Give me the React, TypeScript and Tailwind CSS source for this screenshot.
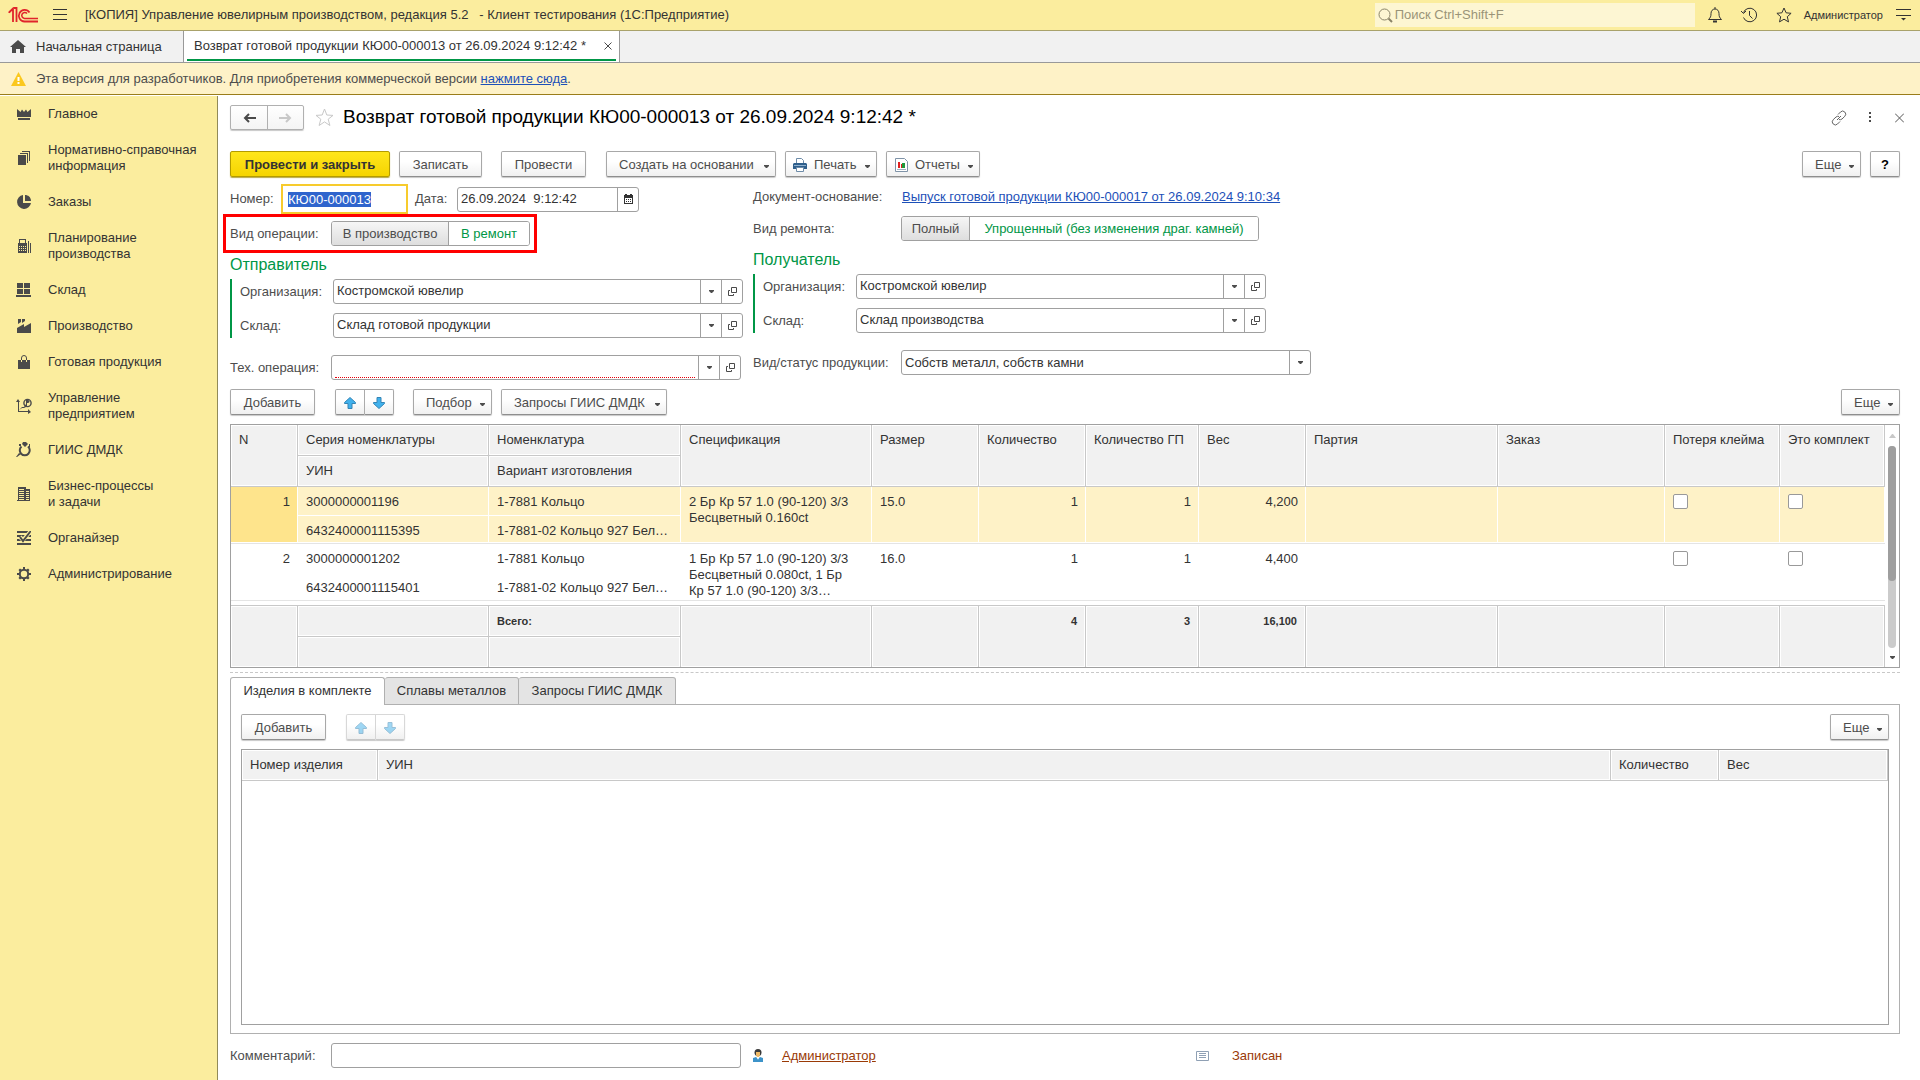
import { useEffect, useRef, useState } from 'react';
import type { ReactNode } from 'react';
import clsx from 'clsx';

const CARET = (
  <svg width="5" height="3" viewBox="0 0 5 3" className="shrink-0 fill-[#4d4d4d]">
    <path d="M0 0h5v1L3 3H2L0 1z" />
  </svg>
);

interface NavItem {
  label: string[];
  icon: ReactNode;
}

const NAV: NavItem[] = [
  {
    label: ['Главное'],
    icon: <path d="M1 3l3.500 3L6 3.500 8 6l2-2.500L11.500 6 15 3v8H1zM2 12h12v2H2z" />,
  },
  {
    label: ['Нормативно-справочная', 'информация'],
    icon: <path d="M2 5h8v10H2zM4 3h8v10h-1V4H4zM6 1h8v10h-1V2H6z" />,
  },
  {
    label: ['Заказы'],
    icon: <path d="M7 1v8h8a7 7 0 1 1-8-8zM9 1c3 0 6 2 6 6H9z" />,
  },
  {
    label: ['Планирование', 'производства'],
    icon: (
      <>
        <path d="M3 1h7v4h1v10H2V5h1zM4 2v3h5V2zM12 3h1v12h-1zM14 5h1v10h-1z" fillRule="evenodd" />
        <path d="M3 8h1v1H3zM5 8h1v1H5zM7 8h1v1H7zM9 8h1v1H9zM3 10h1v1H3zM5 10h1v1H5zM7 10h1v1H7zM9 10h1v1H9zM3 12h1v1H3zM5 12h1v1H5zM7 12h1v1H7zM9 12h1v1H9z" fill="#fbed9e" />
      </>
    ),
  },
  {
    label: ['Склад'],
    icon: <path d="M1 1h6v5H1zM8 1h6v5H8zM1 7h6v5H1zM8 7h6v5H8zM0 13h15v2H0z" />,
  },
  {
    label: ['Производство'],
    icon: <path d="M2 1h3v3L2 6zM6 1h3v2L6 5zM1 10l7-4v3l7-4v10H1z" />,
  },
  {
    label: ['Готовая продукция'],
    icon: (
      <>
        <path d="M2 6h12v9H2z" />
        <path d="M5.500 6V4a2.500 2.500 0 0 1 5 0v2" fill="none" stroke="#4a4a4a" />
        <path d="M5 6h1v2H5zM10 6h1v2h-1z" fill="#fbed9e" />
      </>
    ),
  },
  {
    label: ['Управление', 'предприятием'],
    icon: (
      <>
        <path d="M2 1l2 3H3v9h9v-2l3 3-3 2v-2H2V4H0zM3 12l3-3h2l2-3v3l-2 1H6z" />
        <circle cx="11.5" cy="5" r="3.6" fill="none" stroke="#4a4a4a" strokeWidth="1.4" />
        <path d="M10 2h2c2 0 2 3 0 3h-1v3h-1z" />
      </>
    ),
  },
  {
    label: ['ГИИС ДМДК'],
    icon: (
      <>
        <path d="M7 0h3l2 2-3 3-3-3zM0 15l3-4 2 1-4 3zM3 2h2v2H3zM13 2h1v3h-1z" />
        <path d="M5.500 4.500a5 5 0 1 0 6.500 0" fill="none" stroke="#4a4a4a" strokeWidth="2" />
      </>
    ),
  },
  {
    label: ['Бизнес-процессы', 'и задачи'],
    icon: (
      <path
        d="M2 1h8v2h4v12H1v-1h1zM3 3v1h5V3zM3 5v1h5V5zM3 7v1h5V7zM3 9v1h5V9zM3 11v1h5v-1zM3 13v1h5v-1zM10 5v1h3V5zM10 7v1h3V7zM10 9v1h3V9zM10 11v1h3v-1zM10 13v1h3v-1z"
        fillRule="evenodd"
      />
    ),
  },
  {
    label: ['Органайзер'],
    icon: (
      <>
        <path d="M1 1h14v2H1zM1 5h14v2H1zM1 9h14v2H1zM1 13h14v2H1z" />
        <path d="M4 7l3 3 7-8" fill="none" stroke="#fbed9e" strokeWidth="4" />
        <path d="M4 7l3 4 7-9" fill="none" stroke="#4a4a4a" strokeWidth="2" />
      </>
    ),
  },
  {
    label: ['Администрирование'],
    icon: (
      <>
        <circle cx="8" cy="8" r="4.200" fill="none" stroke="#4a4a4a" strokeWidth="2" />
        <path d="M7 1h2v3H7zM7 12h2v3H7zM1 7h3v2H1zM12 7h3v2h-3zM2.500 4L4 2.500 6 4 4 6zM10 4l2-1.500L13.500 4 12 6zM2.500 12L4 10l2 2-2 1.500zM10 12l2-2 1.500 2-1.500 1.500z" />
      </>
    ),
  },
];

interface ProductRow {
  n: number;
  series: string;
  uin: string;
  item: string;
  variant: string;
  spec: string[];
  size: string;
  weight: string;
}

const ROWS: ProductRow[] = [
  {
    n: 1,
    series: '3000000001196',
    uin: '6432400001115395',
    item: '1-7881 Кольцо',
    variant: '1-7881-02 Кольцо 927 Бел…',
    spec: ['2 Бр Кр 57 1.0 (90-120) 3/3', 'Бесцветный 0.160ct'],
    size: '15.0',
    weight: '4,200',
  },
  {
    n: 2,
    series: '3000000001202',
    uin: '6432400001115401',
    item: '1-7881 Кольцо',
    variant: '1-7881-02 Кольцо 927 Бел…',
    spec: ['1 Бр Кр 57 1.0 (90-120) 3/3', 'Бесцветный 0.080ct, 1 Бр', 'Кр 57 1.0 (90-120) 3/3…'],
    size: '16.0',
    weight: '4,400',
  },
];

const HEAD_CELL =
  'border-r border-[#c8c8c8] bg-[#f1f1f1] shadow-[inset_0_0_0_1px_#fff] px-2 pt-[7px] text-left align-top';

function Button({
  children,
  className,
  menu,
  disabled,
  label,
}: {
  children: ReactNode;
  className?: string;
  menu?: boolean;
  disabled?: boolean;
  label?: string;
}) {
  return (
    <button
      type="button"
      disabled={disabled}
      aria-label={label}
      className={clsx(
        'flex h-[26px] shrink-0 items-center rounded-[2px] border bg-linear-to-b from-white from-40% to-[#f0f0f0] pt-px whitespace-nowrap text-[#4d4d4d] shadow-[0_1px_1px_#c8c8c8]',
        disabled ? 'border-[#d8d8d8] border-b-[#c8c8c8]' : 'border-[#a8a8a8] border-b-[#8e8e8e]',
        menu ? 'justify-between pr-[6px]' : 'justify-center',
        className,
      )}
    >
      {children}
      {menu && <span className="flex pt-1">{CARET}</span>}
    </button>
  );
}

function Arrow({ down, faded }: { down?: boolean; faded?: boolean }) {
  return (
    <svg width="12" height="12" viewBox="0 0 12 12" className={clsx(faded && 'opacity-50')}>
      <path
        d={down ? 'M4 .5h4v5h3.500v1L6 11.500.5 6.500v-1H4z' : 'M4 11.500h4v-5h3.500v-1L6 .5.5 5.500v1H4z'}
        fill="#41b1ec"
        stroke="#3484b5"
      />
    </svg>
  );
}

function MoveButtons({ disabled }: { disabled?: boolean }) {
  return (
    <div className="flex">
      <Button label="Переместить вверх" disabled={disabled} className="w-[30px] rounded-r-none">
        <Arrow faded={disabled} />
      </Button>
      <Button label="Переместить вниз" disabled={disabled} className="w-[29px] rounded-l-none border-l-0">
        <Arrow down faded={disabled} />
      </Button>
    </div>
  );
}

function RefField({
  id,
  label,
  value,
  labelClass,
  required,
}: {
  id: string;
  label: string;
  value: string;
  labelClass: string;
  required?: boolean;
}) {
  return (
    <div className="flex h-[25px] items-center">
      <label htmlFor={id} className={clsx('shrink-0', labelClass)}>
        {label}
      </label>
      <div className="flex h-full w-[410px] rounded-[3px] border border-[#a0a0a0] bg-white">
        <div className="flex flex-1 px-[3px] pb-px">
          <input
            id={id}
            defaultValue={value}
            className={clsx('w-full text-[#333] outline-none', required && 'border-b border-dotted border-red-600')}
          />
        </div>
        <button type="button" aria-label="Выбрать" className="flex w-[21px] items-center justify-center border-l border-[#a0a0a0]">
          {CARET}
        </button>
        <button type="button" aria-label="Открыть" className="flex w-[21px] items-center justify-center border-l border-[#a0a0a0]">
          <svg width="9" height="9" viewBox="0 0 9 9" fill="none" stroke="#4a4a4a">
            <path d="M3.500.5h5v5h-5zM2 3.500H.5v5h5V7" />
          </svg>
        </button>
      </div>
    </div>
  );
}

function Toggle({ name, options, widths }: { name: string; options: string[]; widths: string[] }) {
  const [value, setValue] = useState(options[0]);

  return (
    <div className="flex h-[25px] overflow-hidden rounded-[3px] border border-[#a0a0a0]">
      {options.map((option, i) => (
        <label
          key={option}
          className={clsx(
            'flex items-center justify-center whitespace-nowrap',
            widths[i],
            i > 0 && 'border-l border-[#a0a0a0]',
            value === option ? 'bg-linear-to-b from-[#f6f6f6] to-[#dedede] text-[#4d4d4d]' : 'bg-white text-[#009646]',
          )}
        >
          <input
            type="radio"
            name={name}
            className="sr-only"
            checked={value === option}
            onChange={() => setValue(option)}
          />
          {option}
        </label>
      ))}
    </div>
  );
}

function TitleBar() {
  return (
    <header className="flex h-[31px] items-center border-b border-[#a9a26b] bg-[#fbed9e] pr-[9px] pl-2">
      <svg width="30" height="16" viewBox="0 0 30 16" fill="none" stroke="#e0242b" strokeWidth="1.800" className="shrink-0">
        <path d="M1 5.500l4-4V15M1 5.500V6M8.500 15V1H6" />
        <path d="M21.500 5.500a5.800 5.800 0 1 0-5 9H30" />
        <path d="M19 6.500a3 3 0 1 0-2.500 5H30" strokeWidth="1.500" />
      </svg>
      <button type="button" aria-label="Меню" className="ml-[15px]">
        <svg width="14" height="12" viewBox="0 0 14 12" stroke="#333">
          <path d="M0 .5h14M0 5.500h14M0 10.500h14" />
        </svg>
      </button>
      <h1 className="ml-[18px] whitespace-pre">
        [КОПИЯ] Управление ювелирным производством, редакция 5.2 {'  - '}Клиент тестирования (1С:Предприятие)
      </h1>
      <label className="ml-auto flex h-6 w-[320px] items-center gap-[2px] bg-[#fdf6d3] pl-[3px]">
        <svg width="15" height="15" viewBox="0 0 15 15" fill="none" stroke="#8a8468" className="shrink-0">
          <circle cx="6.500" cy="6.500" r="5.500" />
          <path d="M10.500 10.500l3.500 3.500" strokeWidth="2" />
        </svg>
        <input
          type="search"
          aria-label="Поиск"
          placeholder="Поиск Ctrl+Shift+F"
          className="w-full outline-none placeholder:text-[#9a9478]"
        />
      </label>
      <div className="ml-3 flex items-center gap-[18px]">
        <button type="button" aria-label="Уведомления">
          <svg width="16" height="16" viewBox="0 0 16 16" fill="none" stroke="#333">
            <path d="M1.500 12.500c2-2 2.500-3 2.500-6 0-2.500 1.500-4.500 4-4.500s4 2 4 4.500c0 3 .5 4 2.500 6zM8 0v2" />
            <path d="M6 14.500h4" strokeWidth="2" />
          </svg>
        </button>
        <button type="button" aria-label="История">
          <svg width="17" height="16" viewBox="0 0 17 16" fill="none" stroke="#333">
            <path d="M2.500 5.500a6.800 6.800 0 1 1 0 5M8.500 4v4.500l3 3" />
            <path d="M0 4l2.500 2.500L5 4" />
          </svg>
        </button>
        <button type="button" aria-label="Избранное">
          <svg width="16" height="16" viewBox="0 0 16 16" fill="none" stroke="#333">
            <path d="M8 1l2.100 4.800 5 .5-3.800 3.400 1.200 5.200L8 12.200l-4.500 2.700 1.200-5.200L.9 6.300l5-.5z" />
          </svg>
        </button>
      </div>
      <span className="ml-3 text-[11px]">Администратор</span>
      <button type="button" aria-label="Настройки" className="ml-[13px]">
        <svg width="15" height="12" viewBox="0 0 15 12" stroke="#333">
          <path d="M0 .5h15M0 6.500h15" />
          <path d="M5 9h5L7.500 11.500z" fill="#333" stroke="none" />
        </svg>
      </button>
    </header>
  );
}

function WindowTabs() {
  return (
    <nav className="flex h-8 border-b border-[#999] bg-[#f1f1f1]">
      <button type="button" className="flex w-[183px] items-center gap-[10px] pl-[10px]">
        <svg width="16" height="14" viewBox="0 0 16 14" className="fill-[#4a4a4a]">
          <path d="M8 0l8 7h-2v6H10V9H6v4H2V7H0z" />
        </svg>
        Начальная страница
      </button>
      <div className="w-[437px] border-x border-[#999] bg-white px-[3px]">
        <div className="flex h-[30px] items-center justify-between border-b-2 border-[#009646] pt-[2px] pr-1 pl-[7px]">
          <span className="whitespace-nowrap">Возврат готовой продукции КЮ00-000013 от 26.09.2024 9:12:42 *</span>
          <button type="button" aria-label="Закрыть вкладку">
            <svg width="8" height="8" viewBox="0 0 8 8" stroke="#4a4a4a">
              <path d="M.5.5l7 7M7.500.5l-7 7" />
            </svg>
          </button>
        </div>
      </div>
    </nav>
  );
}

function Sidebar() {
  return (
    <nav className="mt-px w-[218px] shrink-0 border-r border-[#918a58] bg-[#fbed9e]">
      {NAV.map((item) => (
        <a key={item.label[0]} href="#" className="flex items-center gap-4 py-[10px] pl-4 text-[#333]">
          <svg width="16" height="16" viewBox="0 0 16 16" className="shrink-0 fill-[#4a4a4a]">
            {item.icon}
          </svg>
          <span>
            {item.label.map((line) => (
              <span key={line} className="block">
                {line}
              </span>
            ))}
          </span>
        </a>
      ))}
    </nav>
  );
}

function PageHeader() {
  return (
    <div className="flex h-[25px] items-center">
      <div className="flex h-full rounded-[2px] border border-[#b0b0b0] bg-linear-to-b from-white to-[#f4f4f4] shadow-[0_1px_1px_#c8c8c8]">
        <button type="button" aria-label="Назад" className="flex w-9 items-center justify-center">
          <svg width="13" height="10" viewBox="0 0 13 10" fill="none" stroke="#4a4a4a" strokeWidth="2">
            <path d="M13 5H2M6 1L2 5l4 4" />
          </svg>
        </button>
        <button type="button" aria-label="Вперед" className="flex w-9 items-center justify-center border-l border-[#b0b0b0]">
          <svg width="13" height="10" viewBox="0 0 13 10" fill="none" stroke="#c8c8c8" strokeWidth="2">
            <path d="M0 5h11M7 1l4 4-4 4" />
          </svg>
        </button>
      </div>
      <button type="button" aria-label="В избранное" className="ml-[11px]">
        <svg width="19" height="19" viewBox="0 0 19 19" fill="none" stroke="#c8c8c8">
          <path d="M9.500 1l2.300 6 6.200.4-4.800 3.800 1.700 6.300-5.400-3.600-5.400 3.600 1.700-6.300L1 7.400 7.200 7z" />
        </svg>
      </button>
      <h2 className="ml-[9px] pb-px text-[19px] leading-6 whitespace-nowrap text-black">
        Возврат готовой продукции КЮ00-000013 от 26.09.2024 9:12:42 *
      </h2>
      <div className="ml-auto flex items-center">
        <button type="button" aria-label="Получить ссылку">
          <svg width="16" height="16" viewBox="0 0 16 16" fill="none" stroke="#666">
            <path d="M7 4.500l2.500-2.500a3 3 0 0 1 4.300 4.300L11 9a3 3 0 0 1-3 .5M9 11.500L6.500 14a3 3 0 0 1-4.300-4.300L5 7a3 3 0 0 1 3-.5M6 10l4-4" />
          </svg>
        </button>
        <button type="button" aria-label="Действия" className="ml-[22px]">
          <svg width="3" height="13" viewBox="0 0 3 13" className="fill-[#4a4a4a]">
            <path d="M0 1h2v2H0zM0 5h2v2H0zM0 9h2v2H0z" />
          </svg>
        </button>
        <button type="button" aria-label="Закрыть" className="mr-[-4px] ml-[23px]">
          <svg width="9" height="10" viewBox="0 0 9 10" stroke="#555">
            <path d="M0 .5l9 9M9 .5l-9 9" />
          </svg>
        </button>
      </div>
    </div>
  );
}

function CommandBar() {
  return (
    <div className="mt-[21px] flex">
      <button
        type="button"
        className="flex h-[26px] w-[160px] items-center justify-center rounded-[2px] border border-[#b39b00] bg-linear-to-b from-[#ffe61a] to-[#f5d400] pt-px font-bold text-[#333] shadow-[0_1px_1px_#b8a94a]"
      >
        Провести и закрыть
      </button>
      <Button className="ml-[9px] w-[83px]">Записать</Button>
      <Button className="ml-[19px] w-[85px]">Провести</Button>
      <Button menu className="ml-5 w-[170px] pl-3">
        Создать на основании
      </Button>
      <Button menu className="ml-[9px] w-[92px] pl-[7px]">
        <span className="flex items-center gap-[7px]">
          <svg width="14" height="14" viewBox="0 0 14 14">
            <path d="M3.500 6V.5h5l2 2V6" fill="#fff" stroke="#6d8ba8" />
            <path d="M0 6l1-1h12l1 1v5H0z" fill="#2f5f8c" />
            <path d="M1 7h12v1H1z" fill="#8fb1cf" />
            <path d="M3.500 9.500h7v4h-7z" fill="#fff" stroke="#6d8ba8" />
          </svg>
          Печать
        </span>
      </Button>
      <Button menu className="ml-[9px] w-[94px] pl-[8px]">
        <span className="flex items-center gap-[7px]">
          <svg width="13" height="14" viewBox="0 0 13 14">
            <path d="M.5.5h9l3 3v10H.5z" fill="#fff" stroke="#7f93a8" />
            <path d="M3 4h2v6H3zM6 6h1v4H6z" fill="#e02020" />
            <path d="M7 5h3v5H7z" fill="#1f9a3c" />
            <path d="M2 11h9v1H2z" fill="#9fb0c0" />
          </svg>
          Отчеты
        </span>
      </Button>
      <Button menu className="ml-auto w-[59px] pl-3">
        Еще
      </Button>
      <Button className="ml-[9px] w-[30px] font-bold text-black">?</Button>
    </div>
  );
}

function DocumentForm() {
  const numberRef = useRef<HTMLInputElement>(null);

  // The number is focused and fully selected when the form opens
  useEffect(() => {
    numberRef.current?.focus();
    numberRef.current?.select();
  }, []);

  return (
    <div className="mt-[7px] flex">
      <div className="w-[523px] shrink-0">
        <div className="flex h-[30px] items-center">
          <label htmlFor="number" className="w-[51px]">
            Номер:
          </label>
          <input
            id="number"
            ref={numberRef}
            defaultValue="КЮ00-000013"
            className="h-full w-[127px] border-2 border-[#f7cb2d] pl-[5px] text-[#333] outline-none selection:bg-[#2f64cd] selection:text-white"
          />
          <label htmlFor="date" className="ml-[7px] w-[42px]">
            Дата:
          </label>
          <div className="flex h-[25px] w-[182px] rounded-[3px] border border-[#a0a0a0]">
            <input
              id="date"
              defaultValue="26.09.2024  9:12:42"
              className="w-full pl-[3px] text-[#333] outline-none"
            />
            <button type="button" aria-label="Календарь" className="flex w-[21px] shrink-0 items-center justify-center border-l border-[#a0a0a0]">
              <svg width="9" height="10" viewBox="0 0 9 10">
                <path d="M0 1h1V0h2v1h3V0h2v1h1v9H0zM1 4v5h7V4z" fill="#333" fillRule="evenodd" />
                <path d="M2 5h1v1H2zM4 5h1v1H4zM6 5h1v1H6zM2 7h1v1H2zM4 7h1v1H4zM6 7h1v1H6z" fill="#333" />
              </svg>
            </button>
          </div>
        </div>
        <div className="mt-[7px] flex w-[300px] items-center outline-[3px] outline-offset-4 outline-[#ff0000]">
          <span className="w-[101px]">Вид операции:</span>
          <Toggle name="operation" options={['В производство', 'В ремонт']} widths={['w-[116px]', 'w-[81px]']} />
        </div>
        <h3 className="mt-[9px] text-[16px] leading-5 text-[#009646]">Отправитель</h3>
        <div className="mt-1 flex flex-col gap-[9px] border-l-2 border-[#009646] pl-2">
          <RefField id="from-org" label="Организация:" value="Костромской ювелир" labelClass="w-[93px]" />
          <RefField id="from-store" label="Склад:" value="Склад готовой продукции" labelClass="w-[93px]" />
        </div>
        <div className="mt-[17px]">
          <RefField id="tech" label="Тех. операция:" value="" labelClass="w-[101px]" required />
        </div>
      </div>
      <div>
        <div className="flex h-[26px] items-center">
          <span className="w-[149px]">Документ-основание:</span>
          <a href="#" className="text-[#1d50b8] underline">
            Выпуск готовой продукции КЮ00-000017 от 26.09.2024 9:10:34
          </a>
        </div>
        <div className="mt-[6px] flex items-center">
          <span className="w-[148px]">Вид ремонта:</span>
          <Toggle
            name="repair"
            options={['Полный', 'Упрощенный (без изменения драг. камней)']}
            widths={['w-[67px]', 'w-[289px]']}
          />
        </div>
        <h3 className="mt-[9px] text-[16px] leading-5 text-[#009646]">Получатель</h3>
        <div className="mt-1 flex flex-col gap-[9px] border-l-2 border-[#009646] pl-2">
          <RefField id="to-org" label="Организация:" value="Костромской ювелир" labelClass="w-[93px]" />
          <RefField id="to-store" label="Склад:" value="Склад производства" labelClass="w-[93px]" />
        </div>
        <div className="mt-[17px] flex h-[25px] items-center">
          <label htmlFor="kind" className="w-[148px]">
            Вид/статус продукции:
          </label>
          <div className="relative h-full w-[410px]">
            <select
              id="kind"
              className="h-full w-full appearance-none rounded-[3px] border border-[#a0a0a0] bg-white pl-[3px] text-[#333]"
            >
              <option>Собств металл, собств камни</option>
            </select>
            <span className="pointer-events-none absolute inset-y-px right-px flex w-[21px] items-center justify-center border-l border-[#a0a0a0]">
              {CARET}
            </span>
          </div>
        </div>
      </div>
    </div>
  );
}

function ProductTable() {
  return (
    <div className="mt-[9px] flex border border-[#a0a0a0]">
      <table className="w-full table-fixed border-separate border-spacing-0 text-[#333]">
        <colgroup>
          <col className="w-[67px]" />
          <col className="w-[191px]" />
          <col className="w-[192px]" />
          <col className="w-[191px]" />
          <col className="w-[107px]" />
          <col className="w-[107px]" />
          <col className="w-[113px]" />
          <col className="w-[107px]" />
          <col className="w-[192px]" />
          <col className="w-[167px]" />
          <col className="w-[115px]" />
          <col className="w-[105px]" />
        </colgroup>
        <thead>
          <tr className="h-[31px]">
            <th rowSpan={2} className={clsx(HEAD_CELL, 'border-b font-normal')}>N</th>
            <th className={clsx(HEAD_CELL, 'border-b font-normal')}>Серия номенклатуры</th>
            <th className={clsx(HEAD_CELL, 'border-b font-normal')}>Номенклатура</th>
            {['Спецификация', 'Размер', 'Количество', 'Количество ГП', 'Вес', 'Партия', 'Заказ', 'Потеря клейма', 'Это комплект'].map((title) => (
              <th key={title} rowSpan={2} className={clsx(HEAD_CELL, 'border-b font-normal whitespace-nowrap')}>
                {title}
              </th>
            ))}
          </tr>
          <tr className="h-[31px]">
            <th className={clsx(HEAD_CELL, 'border-b font-normal')}>УИН</th>
            <th className={clsx(HEAD_CELL, 'border-b font-normal')}>Вариант изготовления</th>
          </tr>
        </thead>
        {ROWS.map((row, i) => {
          const active = i === 0;
          const base = clsx('px-2 pt-[7px] align-top', active && 'shadow-[inset_-1px_-1px_0_#fff]');
          const half = clsx(base, 'whitespace-nowrap', active && 'bg-[#fef2c7]');
          const cell = clsx(base, 'border-b border-[#e4e4e4]', active && 'bg-[#fef2c7]');
          return (
            <tbody key={row.n}>
              <tr className="h-[29px]">
                <td rowSpan={2} className={clsx(base, 'border-b border-[#e4e4e4] text-right', active && 'bg-[#fee48c]')}>
                  {row.n}
                </td>
                <td className={half}>{row.series}</td>
                <td className={half}>{row.item}</td>
                <td rowSpan={2} className={clsx(cell, 'whitespace-nowrap')}>
                  {row.spec.map((line) => (
                    <div key={line}>{line}</div>
                  ))}
                </td>
                <td rowSpan={2} className={cell}>{row.size}</td>
                <td rowSpan={2} className={clsx(cell, 'text-right')}>1</td>
                <td rowSpan={2} className={clsx(cell, 'text-right')}>1</td>
                <td rowSpan={2} className={clsx(cell, 'text-right')}>{row.weight}</td>
                <td rowSpan={2} className={cell} />
                <td rowSpan={2} className={cell} />
                {['Потеря клейма', 'Это комплект'].map((name) => (
                  <td key={name} rowSpan={2} className={cell}>
                    <input
                      type="checkbox"
                      aria-label={name}
                      className="block size-[15px] appearance-none rounded-[2px] border border-[#999] bg-white"
                    />
                  </td>
                ))}
              </tr>
              <tr className="h-[28px]">
                <td className={clsx(half, 'border-b border-[#e4e4e4]')}>{row.uin}</td>
                <td className={clsx(half, 'border-b border-[#e4e4e4]')}>{row.variant}</td>
              </tr>
            </tbody>
          );
        })}
        <tfoot className="text-[11px] font-bold">
          <tr aria-hidden="true">
            <td colSpan={12} className="h-[5px] border-b border-[#c8c8c8]" />
          </tr>
          <tr className="h-[31px]">
            <td rowSpan={2} className={HEAD_CELL} />
            <td className={clsx(HEAD_CELL, 'border-b')} />
            <td className={clsx(HEAD_CELL, 'border-b')}>Всего:</td>
            {['', '', '4', '3', '16,100', '', '', '', ''].map((total, i) => (
              <td key={i} rowSpan={2} className={HEAD_CELL}>
                <div className="text-right">{total}</div>
              </td>
            ))}
          </tr>
          <tr className="h-[30px]">
            <td className={HEAD_CELL} />
            <td className={HEAD_CELL} />
          </tr>
        </tfoot>
      </table>
      <div className="flex w-[14px] shrink-0 flex-col items-center pt-[9px] pb-2">
        <svg width="7" height="4" viewBox="0 0 7 4" className="fill-[#c8c8c8]">
          <path d="M0 4h7L4 0H3z" />
        </svg>
        <div className="my-2 w-2 flex-1 rounded-full bg-[#cbcbcb]">
          <div className="h-2/3 rounded-full bg-[#9e9e9e]" />
        </div>
        {CARET}
      </div>
    </div>
  );
}

function DetailTabs() {
  return (
    <div className="mt-1 flex flex-1 flex-col">
      <div role="tablist" className="flex h-7 text-[#333]">
        <button
          type="button"
          role="tab"
          aria-selected="true"
          className="w-[155px] rounded-t-[3px] border border-b-0 border-[#b0b0b0] bg-white pb-px"
        >
          Изделия в комплекте
        </button>
        <button type="button" role="tab" className="w-[134px] rounded-t-[3px] border border-l-0 border-[#b0b0b0] bg-[#e4e4e4] pb-px">
          Сплавы металлов
        </button>
        <button type="button" role="tab" className="w-[157px] rounded-t-[3px] border border-l-0 border-[#b0b0b0] bg-[#e4e4e4] pb-px">
          Запросы ГИИС ДМДК
        </button>
        <div className="flex-1 border-b border-[#b0b0b0]" />
      </div>
      <div role="tabpanel" className="flex flex-1 flex-col border border-t-0 border-[#b0b0b0] px-[10px] pt-[9px] pb-2">
        <div className="flex">
          <Button className="w-[85px]">Добавить</Button>
          <div className="ml-5">
            <MoveButtons disabled />
          </div>
          <Button menu className="ml-auto w-[59px] pl-3">
            Еще
          </Button>
        </div>
        <div className="mt-[9px] flex-1 border border-[#a0a0a0]">
          <table className="w-full table-fixed border-separate border-spacing-0 text-[#333]">
            <thead>
              <tr className="h-[31px]">
                <th className={clsx(HEAD_CELL, 'w-[136px] border-b font-normal')}>Номер изделия</th>
                <th className={clsx(HEAD_CELL, 'border-b font-normal')}>УИН</th>
                <th className={clsx(HEAD_CELL, 'w-[108px] border-b font-normal')}>Количество</th>
                <th className={clsx(HEAD_CELL, 'w-[169px] border-b font-normal')}>Вес</th>
              </tr>
            </thead>
          </table>
        </div>
      </div>
    </div>
  );
}

export default function App() {
  return (
    <div className="flex min-h-screen flex-col bg-white font-['Liberation_Sans',Arial,sans-serif] text-[13px] leading-4 text-[#333]">
      <TitleBar />
      <WindowTabs />
      <div className="flex h-8 items-center border-b border-[#9a7d1a] bg-[#fef2c7] pl-[11px]">
        <svg width="15" height="14" viewBox="0 0 15 14" className="mr-[10px]">
          <path d="M7.500 0L15 14H0z" fill="#fbc81e" />
          <path d="M6.500 5h2v4h-2zM6.500 10h2v2h-2z" fill="#fff" />
        </svg>
        <p className="text-[#4d4d4d]">
          Эта версия для разработчиков. Для приобретения коммерческой версии{' '}
          <a href="#" className="text-[#1d50b8] underline">
            нажмите сюда
          </a>
          .
        </p>
      </div>
      <div className="flex flex-1">
        <Sidebar />
        <main className="flex min-w-0 flex-1 flex-col pt-[10px] pr-5 pb-3 pl-3 text-[#4d4d4d]">
          <PageHeader />
          <CommandBar />
          <DocumentForm />
          <div className="mt-[9px] flex">
            <Button className="w-[85px]">Добавить</Button>
            <div className="ml-5">
              <MoveButtons />
            </div>
            <Button menu className="ml-[19px] w-[79px] pl-3">
              Подбор
            </Button>
            <Button menu className="ml-[9px] w-[166px] pl-3">
              Запросы ГИИС ДМДК
            </Button>
            <Button menu className="ml-auto w-[59px] pl-3">
              Еще
            </Button>
          </div>
          <ProductTable />
          <div className="mt-1 border-t border-dashed border-[#c8c8c8]" />
          <DetailTabs />
          <div className="mt-[9px] flex items-center">
            <label htmlFor="comment" className="w-[101px]">
              Комментарий:
            </label>
            <input id="comment" className="h-[25px] w-[410px] rounded-[3px] border border-[#a0a0a0] px-[3px] outline-none" />
            <svg width="10" height="13" viewBox="0 0 10 13" className="ml-3">
              <circle cx="5" cy="3.500" r="3.500" fill="#3a3a3a" />
              <path d="M3 3h4v3L6 8H4L3 6z" fill="#f2bb66" />
              <path d="M0 13V9l3-1 2 2 2-2 3 1v4z" fill="#3d93c9" />
              <path d="M4 8h2l-1 3z" fill="#fff" />
            </svg>
            <a href="#" className="ml-[19px] w-[414px] text-[#9a3a06] underline">
              Администратор
            </a>
            <svg width="13" height="10" viewBox="0 0 13 10" fill="none" stroke="#8fa0b4">
              <path d="M.5.5h12v9H.5zM3 2.500h7M3 4.500h7M3 6.500h7" />
            </svg>
            <span className="ml-[23px] text-[#9a3a06]">Записан</span>
          </div>
        </main>
      </div>
    </div>
  );
}
